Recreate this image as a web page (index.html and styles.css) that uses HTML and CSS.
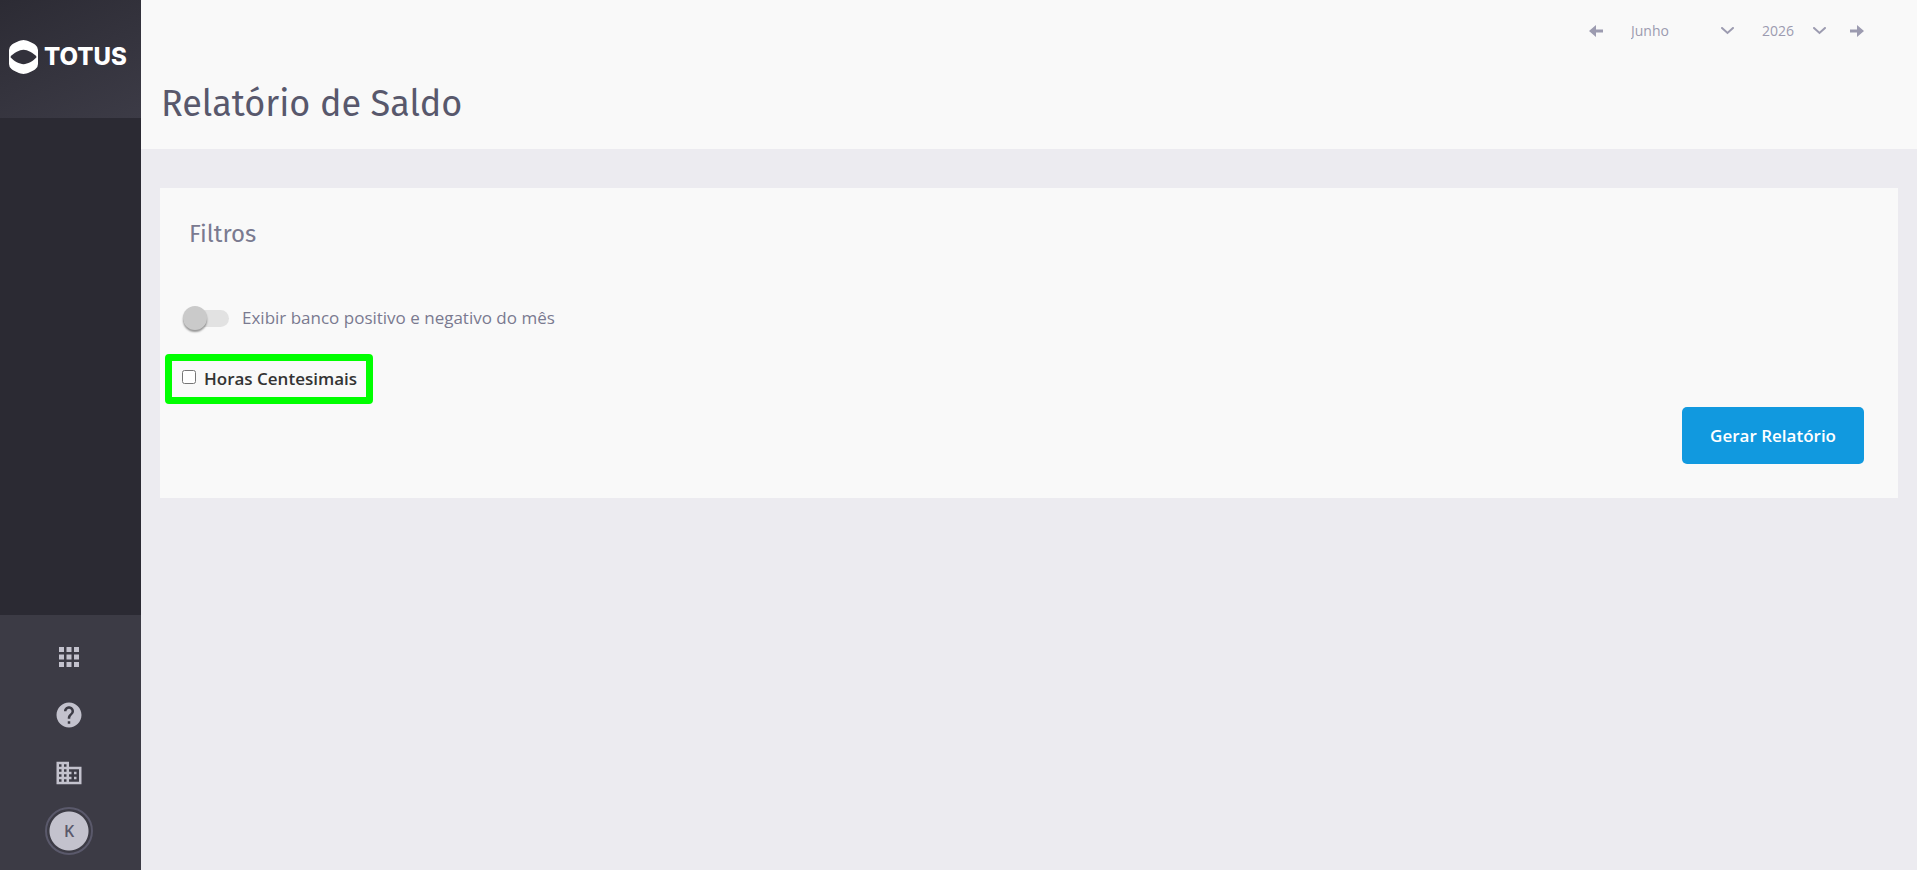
FILE: index.html
```html
<!DOCTYPE html>
<html lang="pt-BR">
<head>
<meta charset="utf-8">
<title>Relatório de Saldo</title>
<link rel="stylesheet" href="styles.css">
</head>
<body>
<div class="app">
  <aside class="sidebar">
    <a class="brand" href="#" aria-label="TOTUS">
      <svg class="brand-mark" viewBox="0 0 29 34" aria-hidden="true">
        <path fill="#fff" d="M14.500 0C18 .3 23.500 2.600 26.500 5Q29 7 29 10V24Q29 27 26.500 29C23.500 31.400 18 33.700 14.500 34C11 33.700 5.500 31.400 2.500 29Q0 27 0 24V10Q0 7 2.500 5C5.500 2.600 11 .3 14.500 0Z"/>
        <path fill="#32313b" d="M1.300 17C5 12.500 10.500 10 14.500 9.800C18.500 10 24 12.500 27.700 17C24 21.500 18.500 24 14.500 24.200C10.500 24 5 21.500 1.300 17Z"/>
      </svg>
      <span class="brand-name">TOTUS</span>
    </a>
    <nav class="tools">
      <button class="tool" type="button" aria-label="Aplicativos">
        <svg viewBox="0 0 24 24"><path d="M4 8h4V4H4v4zm6 12h4v-4h-4v4zm-6 0h4v-4H4v4zm0-6h4v-4H4v4zm6 0h4v-4h-4v4zm6-10v4h4V4h-4zm-6 4h4V4h-4v4zm6 6h4v-4h-4v4zm0 6h4v-4h-4v4z"/></svg>
      </button>
      <button class="tool" type="button" aria-label="Ajuda">
        <svg viewBox="0 0 24 24"><path d="M12 2C6.480 2 2 6.480 2 12s4.480 10 10 10 10-4.480 10-10S17.520 2 12 2zm1 17h-2v-2h2v2zm2.070-7.750l-.9.920C13.450 12.900 13 13.500 13 15h-2v-.5c0-1.100.45-2.100 1.170-2.830l1.240-1.260c.37-.36.59-.86.59-1.410 0-1.100-.9-2-2-2s-2 .9-2 2H8c0-2.210 1.790-4 4-4s4 1.790 4 4c0 .88-.36 1.680-.93 2.250z"/></svg>
      </button>
      <button class="tool" type="button" aria-label="Empresa">
        <svg viewBox="0 0 24 24"><path d="M12 7V3H2v18h20V7H12zM6 19H4v-2h2v2zm0-4H4v-2h2v2zm0-4H4V9h2v2zm0-4H4V5h2v2zm4 12H8v-2h2v2zm0-4H8v-2h2v2zm0-4H8V9h2v2zm0-4H8V5h2v2zm10 12h-8v-2h2v-2h-2v-2h2v-2h-2V9h8v10zm-2-8h-2v2h2v-2zm0 4h-2v2h2v-2z"/></svg>
      </button>
      <button class="tool" type="button" aria-label="Perfil"><span class="avatar">K</span></button>
    </nav>
  </aside>

  <main class="main">
    <header class="header">
      <div class="period">
        <button class="step" type="button" aria-label="Mês anterior">
          <svg viewBox="0 0 14 12"><path d="M0 6L7 0V4.500H14V7.500H7V12Z"/></svg>
        </button>
        <div class="picker month">
          <select aria-label="Mês"><option>Junho</option></select>
          <svg viewBox="0 0 13 8"><path d="M1 1L6.500 6L12 1"/></svg>
        </div>
        <div class="picker year">
          <select aria-label="Ano"><option>2026</option></select>
          <svg viewBox="0 0 13 8"><path d="M1 1L6.500 6L12 1"/></svg>
        </div>
        <button class="step" type="button" aria-label="Próximo mês">
          <svg viewBox="0 0 14 12"><path d="M14 6L7 0V4.500H0V7.500H7V12Z"/></svg>
        </button>
      </div>
      <h1 class="title">Relatório de Saldo</h1>
    </header>

    <section class="card">
      <h2 class="card-title">Filtros</h2>
      <label class="switch-row">
        <input class="switch" type="checkbox" role="switch">
        <span>Exibir banco positivo e negativo do mês</span>
      </label>
      <label class="check-row">
        <input class="check" type="checkbox">
        <span>Horas Centesimais</span>
      </label>
      <button class="submit" type="button">Gerar Relatório</button>
    </section>
  </main>
</div>
</body>
</html>
```
FILE: styles.css
```css
* {
  box-sizing: border-box;
}

body {
  margin: 0;
  background: #ecebf0;
  color: #7a7a90;
  font-family: "Open Sans", "Noto Sans", sans-serif;
  font-size: 17px;
  line-height: 24px;
}

button,
select {
  border: 0;
  padding: 0;
  background: none;
  color: inherit;
  font: inherit;
  cursor: pointer;
}

.app {
  display: flex;
  min-height: 100vh;
}

/* Sidebar */
.sidebar {
  display: flex;
  flex-direction: column;
  justify-content: space-between;
  flex: 0 0 141px;
  background: #2b2a33;
}

.brand {
  display: flex;
  align-items: center;
  gap: 6px;
  padding: 40px 9px 44px;
  background: linear-gradient(155deg, #2c2b34, #3c3b46);
  color: #fff;
  text-decoration: none;
}

.brand-mark {
  flex: none;
  width: 29px;
  height: 34px;
}

.brand-name {
  font-family: Inter, sans-serif;
  font-size: 24px;
  font-weight: 800;
}

.tools {
  display: flex;
  flex-direction: column;
  padding: 13px 3px 10px 0;
  background: #3c3b45;
}

.tool {
  display: grid;
  place-items: center;
  height: 58px;
}

.tool svg {
  width: 30px;
  height: 30px;
  fill: #c3c2cd;
}

.avatar {
  display: grid;
  place-items: center;
  width: 48px;
  height: 48px;
  border: 2px solid #5a596b;
  border-radius: 50%;
  background: radial-gradient(circle, #c3c2cd 19px, transparent 20px);
  color: #5a596b;
  font-size: 16px;
  font-weight: 600;
}

/* Page header */
.main {
  flex: 1;
  min-width: 0;
}

.header {
  padding: 19px 53px 21px 20px;
  background: #f9f9f9;
}

.period {
  display: flex;
  align-items: center;
  justify-content: flex-end;
  gap: 28px;
  margin-bottom: 37px;
  color: #9c9bb0;
  font-size: 14px;
}

.step,
.picker {
  display: flex;
  align-items: center;
  height: 24px;
}

.step svg {
  width: 14px;
  height: 12px;
  fill: #9c9bb0;
}

.picker {
  position: relative;
}

.picker select {
  appearance: none;
  width: 100%;
  line-height: 24px;
}

.picker svg {
  position: absolute;
  right: 0;
  width: 13px;
  height: 8px;
  fill: none;
  stroke: #9c9bb0;
  stroke-width: 2;
  stroke-linecap: round;
  pointer-events: none;
}

.month {
  width: 103px;
}

.year {
  width: 64px;
  margin-right: -4px;
}

.title {
  margin: 0;
  color: #58586c;
  font-family: "Fira Sans", "Noto Sans", sans-serif;
  font-size: 36px;
  font-weight: 400;
  line-height: 48px;
}

/* Filters card */
.card {
  display: flex;
  flex-direction: column;
  align-items: flex-start;
  margin: 39px 19px;
  padding: 30px 34px 34px 5px;
  background: #f9f9f9;
}

.card-title {
  margin: 0 0 56px 24px;
  font-family: "Fira Sans", "Noto Sans", sans-serif;
  font-size: 24px;
  font-weight: 400;
  line-height: 32px;
}

.switch-row {
  display: flex;
  align-items: center;
  gap: 13px;
  margin: 0 0 24px 18px;
}

.switch {
  appearance: none;
  display: flex;
  align-items: center;
  width: 46px;
  height: 17px;
  margin: 0;
  border-radius: 9px;
  background: #e2e2e2;
}

.switch::before {
  content: "";
  width: 24px;
  height: 24px;
  border-radius: 50%;
  background: #cacaca;
  box-shadow: 0 2px 2px rgba(0, 0, 0, 0.4);
}

.check-row {
  display: flex;
  align-items: center;
  gap: 8px;
  border: 7px solid #00ff00;
  border-radius: 4px;
  padding: 6px 9px 6px 10px;
  color: #333;
  font-weight: 600;
}

.check {
  width: 14px;
  height: 14px;
  margin: 0 0 4px;
}

.submit {
  align-self: flex-end;
  margin-top: 3px;
  border-radius: 5px;
  padding: 17px 28px 16px;
  background: #1199df;
  color: #fff;
  font-weight: 600;
}
```
